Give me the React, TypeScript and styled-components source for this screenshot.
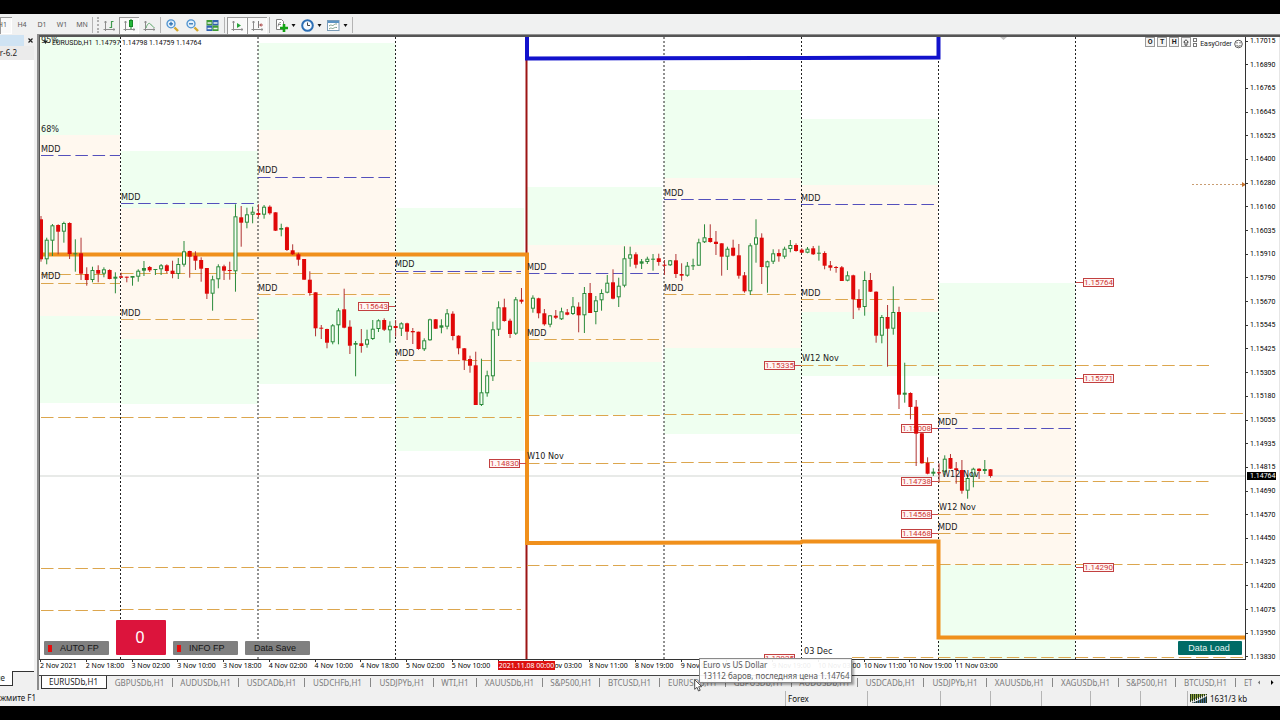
import React from 'react';
import styled, { createGlobalStyle, css } from 'styled-components';

const GlobalStyle = createGlobalStyle`
  * { box-sizing: border-box; }
  html, body { margin: 0; background: #000; }
  button { font: inherit; color: inherit; margin: 0; padding: 0; border: 0; background: none; border-radius: 0; }
`;

const uiFont = '"Noto Sans", "Open Sans", sans-serif';
const chartFont = '"DejaVu Sans Condensed", "DejaVu Sans", sans-serif';
const timeFont = '"Noto Sans", "DejaVu Sans", sans-serif';
const priceFont = 'Roboto, "Liberation Sans", sans-serif';

/* ---------- data ---------- */

type Candle = ['r' | 'g', number, number, number, number];

// colour, high, body top, body bottom, low
const candles: (Candle | null)[] = [
  ['r', 216, 219.3, 259.3, 261.7], ['g', 237.7, 239.7, 259.3, 264.3], ['g', 224, 225.3, 240.7, 256],
  ['r', 224.3, 225, 231.7, 254.3], ['g', 221.7, 223, 231.7, 242.7], ['r', 222.3, 223, 254, 259],
  ['g', 239.3, 253.3, 254.3, 271.7], ['r', 237.7, 253.3, 273.7, 280], ['r', 267.3, 274, 280, 285.7],
  ['g', 266.7, 270, 280, 282.3], ['r', 265.3, 270, 273.7, 282.3], ['g', 267.3, 269.3, 273.7, 277.3],
  ['r', 269.3, 270, 279, 279.3], ['g', 272.3, 276.7, 278.7, 293.3], ['r', 272.7, 276.3, 277.7, 278],
  ['r', 276.7, 276.7, 277.7, 282.3], ['g', 276, 276, 277.7, 285.7], ['g', 269.3, 270.7, 276.7, 281.7],
  ['g', 261, 268, 270.7, 276], ['r', 266, 267, 270.3, 272], ['g', 269, 269, 269.7, 275],
  ['g', 264, 265.3, 269.3, 275], ['r', 264.3, 265.3, 271, 273.3], ['r', 260.7, 270.7, 274, 278.3],
  ['g', 258, 264, 274, 279], ['g', 241, 251.3, 264.7, 266.7], ['r', 250.7, 251, 256.7, 277.7],
  ['r', 251.3, 255.7, 260.7, 270], ['r', 257.3, 260, 268.7, 281.7], ['r', 268, 268, 293.7, 299],
  ['g', 275.7, 279.3, 293.7, 310.7], ['g', 264.3, 266.3, 279.3, 288.3], ['r', 264.7, 266.3, 270.7, 280],
  ['r', 261.7, 270, 271, 279.7], ['g', 204.3, 216.3, 271.3, 291.7], ['r', 206, 217.3, 222.7, 246.7],
  ['g', 207.7, 214.3, 222.7, 228.3], ['g', 206.7, 211.7, 214.7, 223.3], ['r', 204.3, 213, 215, 217.3],
  ['g', 205, 206.7, 214.7, 218.7], ['r', 205.3, 206.7, 213.3, 214.7], ['r', 212.3, 212.3, 230.7, 231],
  ['g', 223.7, 228, 229.7, 236.3], ['r', 226.7, 227.3, 250, 251], ['r', 244.3, 250.3, 254.3, 255],
  ['r', 252.7, 254.3, 259.7, 265.7], ['r', 259, 259, 279.7, 279.7], ['r', 271.3, 279.7, 293, 295.7],
  ['r', 292.3, 292.3, 328.3, 336.3], ['r', 325, 327.7, 328.7, 339], ['r', 328.7, 329, 342.7, 348.3],
  ['g', 324, 325.3, 342.3, 344.3], ['g', 308.3, 310.3, 325.3, 344.3], ['r', 288.7, 309.3, 327.7, 328.3],
  ['r', 320.3, 326.7, 345.7, 354], ['g', 341, 343, 344.7, 376.3], ['r', 329, 343.3, 346, 352.7],
  ['g', 329.7, 339.3, 344.7, 347.7], ['g', 320, 328.7, 339, 340], ['g', 319.3, 320.3, 329, 332],
  ['r', 318.3, 320, 329.7, 331], ['g', 321.3, 325.7, 330.3, 342.7], ['r', 320, 326, 328, 336.7],
  ['g', 322.3, 323.3, 328.7, 336], ['r', 322.7, 323.3, 331.7, 340], ['r', 328, 331, 332.3, 344],
  ['r', 331.7, 331.7, 349, 349.7], ['g', 338.3, 340.3, 349.3, 351], ['g', 318.7, 319.3, 340.3, 340.7],
  ['r', 319, 319.3, 328.7, 329], ['g', 319.3, 325.3, 327.7, 333.3], ['g', 309, 313.3, 326.7, 329.3],
  ['r', 311.3, 313.7, 336, 340.3], ['r', 335.3, 335.7, 348.3, 354.3], ['r', 348, 348.3, 360.3, 370],
  ['r', 355.7, 359, 365.7, 372.7], ['r', 351.7, 365.3, 405, 405], ['g', 358.7, 392.3, 405, 406],
  ['g', 370.7, 375.3, 393.3, 396.7], ['g', 321.7, 329.3, 376.3, 381], ['g', 301.3, 307.3, 329.7, 336],
  ['r', 298.7, 307.3, 321, 321.7], ['r', 318.7, 320.7, 334, 338], ['g', 297, 299.3, 333.7, 335],
  ['r', 288, 299.7, 301.7, 303.7], null, ['g', 295.3, 297.7, 308.7, 312.7],
  ['r', 297.7, 298.3, 313.3, 318.3], ['r', 309, 313.3, 324.3, 325.7], ['g', 315.3, 315.3, 324.7, 327.3],
  ['r', 310, 315.7, 317.7, 319], ['g', 307.7, 311.3, 319.3, 320], ['r', 309, 312.3, 314.7, 315.3],
  ['g', 297, 306.3, 314, 315], ['r', 302.3, 306.7, 315.3, 332.3], ['g', 287, 293, 315.3, 333],
  ['r', 283, 293, 313, 313], ['g', 296, 300.3, 312, 324.3], ['g', 289.3, 293, 300.3, 310.7],
  ['g', 275, 282.7, 292.7, 293.3], ['r', 269.3, 282.3, 298.7, 299.3], ['g', 277.7, 285.7, 297.3, 307],
  ['g', 246.3, 258.3, 285.7, 287.3], ['g', 246.7, 254.3, 258.7, 266.7], ['r', 252.3, 254.3, 264.7, 268.3],
  ['g', 259, 261.3, 263.7, 269], ['g', 256.7, 258.7, 262, 264], ['g', 254, 258.7, 259, 270.7],
  ['r', 253.7, 258.3, 262, 265.7], ['r', 260, 264.7, 265.7, 275], ['g', 260, 260.3, 265.3, 266],
  ['r', 254, 260.3, 274, 278], ['r', 263.3, 274, 275.7, 280.7], ['g', 262, 265.7, 275.7, 276.7],
  ['g', 258.7, 265.3, 266.3, 270], ['g', 238.7, 242.3, 265.7, 265.7], ['g', 224.3, 237.3, 242.3, 243],
  ['r', 224.3, 238, 242, 242.7], ['r', 231, 241.7, 244, 255], ['r', 243.3, 243.3, 256.7, 275.7],
  ['g', 246.7, 248.7, 256.7, 270], ['r', 239.7, 247.7, 255.7, 256.3], ['r', 244, 255.3, 275.7, 278.7],
  ['r', 272, 275.3, 291.3, 292.7], ['g', 243.3, 245.3, 291.3, 295], ['g', 219.3, 237.3, 244.7, 262.7],
  ['r', 233.3, 237.7, 267, 284], ['g', 260.7, 261.3, 267.3, 292.7], ['g', 249.3, 253.3, 261.7, 264],
  ['r', 249.3, 253, 256.3, 261.7], ['g', 246.7, 248.7, 256.7, 258.7], ['g', 240, 245, 249, 252.3],
  ['r', 243.3, 245, 251, 251.7], ['r', 248.3, 249.7, 252.7, 253.3], ['g', 247, 248.7, 252.7, 253.3],
  ['r', 246, 248.3, 254.3, 255], ['g', 245.7, 252.7, 253.7, 260.7], ['r', 251.3, 253, 265.7, 269.3],
  ['r', 261, 265.3, 267.7, 270.7], ['r', 266, 267, 267.7, 272.7], ['r', 266, 267.3, 281, 281],
  ['g', 271.3, 275.3, 280.7, 281.3], ['r', 274.7, 275.3, 299.3, 319], ['r', 289.3, 299, 307.7, 310.3],
  ['g', 271.3, 280, 307, 315.7], ['r', 273, 280, 291.7, 292], ['r', 291.3, 291.7, 335.7, 342.7],
  ['g', 315, 317, 335.7, 343.3], ['r', 305, 317, 328.7, 366.7], ['g', 286.3, 312, 328.7, 334.7],
  ['r', 306.7, 312, 394.7, 409], ['g', 362.7, 392.7, 394.7, 402.7], ['r', 392.3, 393, 407, 419.3],
  ['r', 400, 406.7, 433.7, 466], ['r', 432.7, 433.3, 463.3, 463.7], ['r', 457.3, 462.7, 473.7, 474.3],
  ['g', 468.3, 471.7, 473.7, 476], ['r', 463.3, 472.3, 472.7, 482.7], ['g', 455.3, 458.7, 471.7, 475],
  ['r', 454, 458, 468.7, 469], ['r', 462, 468.3, 470, 483.7], ['r', 460, 470, 490.7, 493.7],
  ['g', 475, 478, 490.7, 498.7], ['g', 467.7, 468.7, 476.7, 487.3], ['r', 468.3, 468.7, 471, 479],
  ['g', 460, 469, 471, 474], ['r', 469, 469.3, 476, 477.7],
];

// left, right, upper band top, middle band top, middle band bottom, lower band bottom
const sessions = [
  [40, 120, 36, 135, 316, 403],
  [121, 258, 151, 208, 339, 404],
  [258, 395, 43, 130, 297, 384],
  [396, 524, 208, 270, 390, 451],
  [527, 662, 187, 245, 362, 415],
  [664, 801, 90, 178, 348, 434],
  [801, 938, 119, 185, 312, 376],
  [938, 1075, 283, 379, 565, 659],
];

const separators = [120.5, 258, 395.5, 664, 801.5, 938.5, 1075.5];

const deviationLines = [
  [41, 120, 155.5], [121, 254, 203.5], [258, 390, 177], [396, 521, 271],
  [527, 659, 273.5], [664, 796, 199.5], [801, 934, 204.5], [938, 1071, 428.5],
];

const goldLines = [
  [41, 110, 274], [41, 120, 283.5], [121, 395, 273], [396, 521, 273], [121, 254, 319],
  [258, 390, 294.5], [396, 521, 360], [527, 659, 339], [664, 796, 294.5], [801, 934, 299],
  [41, 120, 417], [121, 521, 417], [527, 664, 415], [664, 934, 414], [938, 1245, 413],
  [527, 664, 463], [664, 934, 462], [801, 1209, 365.5], [938, 1209, 481],
  [938, 1209, 514.5], [938, 1071, 533.5], [41, 120, 568], [121, 521, 567], [527, 664, 565.5],
  [664, 934, 565], [938, 1245, 564], [41, 120, 610.5], [121, 521, 609.5], [852, 1245, 657],
];

const notes: [number, number, string][] = [
  [41, 43, '95%'], [41, 132, '68%'], [41, 152, 'MDD'], [41, 279, 'MDD'], [121, 200, 'MDD'],
  [121, 316, 'MDD'], [258, 173, 'MDD'], [258, 291, 'MDD'], [395, 267, 'MDD'], [395, 356, 'MDD'],
  [527, 270, 'MDD'], [527, 336, 'MDD'], [664, 196, 'MDD'], [664, 291, 'MDD'], [801, 201, 'MDD'],
  [801, 296, 'MDD'], [802, 361, 'W12 Nov'], [527, 459, 'W10 Nov'], [938, 425, 'MDD'],
  [942, 477, 'W12 Nov'], [939, 510, 'W12 Nov'], [938, 530, 'MDD'], [804, 654, '03 Dec'],
];

// box left, middle, text, side of the tick
const tags: [number, number, string, 'left' | 'right'][] = [
  [358, 306, '1.15643', 'right'], [764, 365, '1.15335', 'right'], [489, 463, '1.14830', 'right'],
  [901, 428, '1.15008', 'right'], [901, 481, '1.14738', 'right'], [901, 514, '1.14568', 'right'],
  [901, 533, '1.14468', 'right'], [1083, 282, '1.15764', 'left'], [1083, 378, '1.15271', 'left'],
  [1083, 567, '1.14290', 'left'], [764, 658, '1.12925', 'right'],
];

const prices = [
  '1.17015', '1.16890', '1.16765', '1.16645', '1.16525', '1.16400', '1.16280', '1.16160', '1.16035',
  '1.15910', '1.15790', '1.15670', '1.15545', '1.15425', '1.15305', '1.15180', '1.15055', '1.14935',
  '1.14815', '1.14690', '1.14570', '1.14450', '1.14325', '1.14200', '1.14075', '1.13950', '1.13830',
];

const times = [
  '2 Nov 2021', '2 Nov 18:00', '3 Nov 02:00', '3 Nov 10:00', '3 Nov 18:00', '4 Nov 02:00', '4 Nov 10:00',
  '4 Nov 18:00', '5 Nov 02:00', '5 Nov 10:00', '', '8 Nov 03:00', '8 Nov 11:00', '8 Nov 19:00',
  '9 Nov 03:00', '9 Nov 11:00', '9 Nov 19:00', '10 Nov 03:00', '10 Nov 11:00', '10 Nov 19:00', '11 Nov 03:00',
];

// symbol, tab width
const symbols: [string, number][] = [
  ['EURUSDb', 66], ['GBPUSDb', 66], ['AUDUSDb', 66], ['USDCADb', 66], ['USDCHFb', 66], ['USDJPYb', 63],
  ['WTI', 43], ['XAUUSDb', 66], ['S&P500', 57], ['BTCUSD', 60], ['EURUSDb', 66], ['GBPUSDb', 66],
  ['AUDUSDb', 66], ['USDCADb', 66], ['USDJPYb', 63], ['XAUUSDb', 66], ['XAGUSDb', 66], ['S&P500', 57],
  ['BTCUSD', 60], ['ETHUSD', 60],
];

/* ---------- frame ---------- */

const Page = styled.div`
  position: relative;
  display: flex;
  flex-direction: column;
  min-height: 100vh;
  padding: 14px 0;
  overflow: hidden;
  background: #000;
  color: #1c1c1c;
  font: 8px/12px ${uiFont};
`;

const Toolbar = styled.header`
  display: flex;
  align-items: center;
  height: 20px;
  padding-top: 2px;
  background: #f0f1f1;
`;

const pressed = css`
  background: #f9f9f9;
  box-shadow: inset 1px 1px 0 #9a9a9a, inset -1px -1px 0 #fff;
`;

const PeriodButton = styled.button<{ $on?: boolean }>`
  display: flex;
  justify-content: center;
  align-items: center;
  flex: none;
  width: 20px;
  height: 17px;
  color: #5a5a5a;
  font-size: 7px;
  ${(p) => p.$on && css`
    ${pressed}
    width: 12px;
    justify-content: flex-end;
    padding-right: 5px;
  `}
`;

const ToolButton = styled.button<{ $on?: boolean; $menu?: boolean }>`
  display: flex;
  align-items: center;
  justify-content: center;
  gap: 3px;
  flex: none;
  width: ${(p) => (p.$menu ? 26 : 20)}px;
  height: 17px;
  ${(p) => p.$on && pressed}
`;

const Divider = styled.span<{ $grip?: boolean; $tight?: boolean }>`
  flex: none;
  width: ${(p) => (p.$grip ? 7 : 1)}px;
  height: 16px;
  margin: 0 ${(p) => (p.$grip ? 0 : p.$tight ? 1 : 2)}px;
  border-left: 1px solid #b4b4b4;
  border-right: ${(p) => (p.$grip ? '2px dotted #b0b0b0' : '0')};
`;

const Main = styled.main`
  display: flex;
  flex: 1;
  min-height: 0;
`;

const Dock = styled.aside`
  display: flex;
  flex-direction: column;
  flex: none;
  width: 37px;
  padding-right: 3px;
  background: #f0f0f0;
`;

const DockTitle = styled.div`
  display: flex;
  align-items: center;
  justify-content: flex-end;
  height: 11px;
  margin-top: 1px;
  background: linear-gradient(to right, #cfe3f3 24px, #f0f0f0 24px);
`;

const CloseButton = styled.button`
  display: flex;
  justify-content: center;
  width: 8px;
`;

const DockItem = styled.div`
  display: flex;
  justify-content: flex-end;
  height: 14px;
  padding-right: 17px;
  overflow: hidden;
  background: #ebebeb;
  font-size: 8px;
  line-height: 14px;
  white-space: nowrap;
`;

const DockBody = styled.div`
  flex: 1;
  background: #fff;
`;

const DockTabs = styled.div`
  display: flex;
  height: 19px;
`;

const DockTab = styled.button`
  display: flex;
  justify-content: flex-end;
  width: 13px;
  height: 15px;
  padding-right: 7px;
  overflow: hidden;
  background: #fff;
  border-right: 1px solid #333;
  border-bottom: 1px solid #333;
  line-height: 14px;
`;

const DockRule = styled.span`
  flex: 1;
  border-top: 1px solid #333;
`;

const ChartWindow = styled.section`
  display: flex;
  flex-direction: column;
  flex: 1;
  min-width: 0;
  background: #fff;
  border-top: 1px solid #909090;
  border-left: 2px solid #8c8c8c;
`;

const ChartRow = styled.div`
  display: flex;
  flex: 1;
  min-height: 0;
  border-top: 2px solid #555;
`;

const Plot = styled.div`
  position: relative;
  flex: 1;
  min-width: 0;
  height: 623px;
  overflow: hidden;
  background: #fff;
  border-left: 1px solid #555;
  border-right: 1px solid #333;
  border-bottom: 1px solid #333;
`;

const Drawing = styled.svg`
  display: block;
  width: 100%;
  height: 100%;
`;

const PriceAxis = styled.div`
  position: relative;
  display: flex;
  flex-direction: column;
  justify-content: space-between;
  flex: none;
  width: 34px;
  padding-top: 1px;
  border-right: 1px solid #e6e6e6;
  color: #000;
  font: 7px/6px ${priceFont};
`;

const PriceMark = styled.span`
  display: flex;
  align-items: center;
  gap: 2px;
  &::before {
    content: '';
    width: 2px;
    height: 1px;
    background: #333;
  }
`;

const CurrentPrice = styled.span`
  position: absolute;
  top: 435px;
  left: 1px;
  width: 29px;
  padding-left: 3px;
  background: #000;
  color: #fff;
  line-height: 8px;
`;

const TimeAxis = styled.div`
  position: relative;
  display: grid;
  grid-template-columns: repeat(21, 1fr);
  width: 961px;
  height: 15px;
  margin-left: 1px;
  color: #000;
  font: 7px/8px ${timeFont};
`;

const TimeMark = styled.span`
  white-space: nowrap;
  &::before {
    content: '';
    display: block;
    width: 1px;
    height: 2px;
    background: #333;
  }
`;

const CursorTime = styled.span`
  position: absolute;
  top: 1px;
  left: 458px;
  width: 57px;
  height: 9px;
  background: #dc1010;
  color: #fff;
  line-height: 9px;
  text-align: center;
  white-space: nowrap;
`;

/* ---------- buttons over the chart ---------- */

const ExpertButtons = styled.div`
  position: absolute;
  left: 4px;
  bottom: 4px;
  display: flex;
  align-items: flex-end;
  gap: 7px;
`;

const ExpertButton = styled.button<{ $lamp?: boolean }>`
  display: flex;
  align-items: center;
  gap: 8px;
  width: 65px;
  height: 14px;
  padding-left: ${(p) => (p.$lamp ? 4 : 9)}px;
  border-radius: 1px;
  background: #808080;
  color: #161616;
  font: 9px/14px "Liberation Sans", Arial, sans-serif;
  white-space: nowrap;
`;

const Lamp = styled.i`
  width: 4px;
  height: 7px;
  background: #e80c0c;
`;

const CounterButton = styled.button`
  width: 50px;
  height: 35px;
  padding-right: 2px;
  border-radius: 1px;
  background: #dc143c;
  color: #fff;
  font: 16px/35px "Liberation Sans", Arial, sans-serif;
`;

const LoadButton = styled.button`
  position: absolute;
  right: 3px;
  bottom: 4px;
  width: 64px;
  height: 14px;
  padding-right: 2px;
  border-radius: 1px;
  background: #006b66;
  color: #e6f4f3;
  font: 9px/14px "Liberation Sans", Arial, sans-serif;
`;

const OrderPanel = styled.div`
  position: absolute;
  top: 0;
  right: 2px;
  display: flex;
  align-items: center;
  gap: 2px;
  height: 12px;
  font: 7px/12px ${priceFont};
`;

const OrderButton = styled.button`
  display: flex;
  justify-content: center;
  align-items: center;
  width: 10px;
  height: 10px;
  margin-bottom: 2px;
  background: #f4f4f4;
  border: 1px solid #999;
  font-size: 7px;
  line-height: 8px;
  font-weight: 700;
`;

const OrderName = styled.span`
  margin-top: 1px;
`;

/* ---------- tabs and status ---------- */

const TabStrip = styled.nav`
  display: flex;
  flex: none;
  height: 15px;
  padding-left: 2px;
  overflow: hidden;
  background: #f0f0f0;
  border-top: 1px solid #444;
`;

const Tabs = styled.div`
  display: flex;
  flex: 1;
  min-width: 0;
  overflow: hidden;
`;

const Tab = styled.button<{ $w: number; $active?: boolean }>`
  position: relative;
  flex: none;
  width: ${(p) => p.$w}px;
  height: 13px;
  padding-right: 1px;
  color: #7c7c7c;
  line-height: 12px;
  white-space: nowrap;
  &::after {
    content: '';
    position: absolute;
    top: 2px;
    right: 0;
    width: 1px;
    height: 9px;
    background: #888;
  }
  ${(p) => p.$active && css`
    background: #fff;
    color: #1c1c1c;
    border: solid #333;
    border-width: 0 1px 1px;
    &::after { display: none; }
  `}
`;

const TabArrows = styled.div`
  display: flex;
  flex: none;
  width: 28px;
`;

const ArrowButton = styled.button`
  display: flex;
  justify-content: center;
  align-items: center;
  width: 13px;
  height: 13px;
`;

const StatusBar = styled.footer`
  display: flex;
  align-items: stretch;
  flex: none;
  height: 16px;
  padding-top: 1px;
  background: #f0f0f0;
  color: #111;
  font-size: 8px;
  line-height: 14px;
`;

const StatusHelp = styled.span`
  flex: 1;
  min-width: 0;
  overflow: hidden;
  white-space: nowrap;
`;

const StatusCell = styled.span<{ $w: number }>`
  display: flex;
  align-items: center;
  gap: 3px;
  flex: none;
  width: ${(p) => p.$w}px;
  padding-left: 2px;
  border-left: 1px solid #b5b5b5;
`;

const Tooltip = styled.div`
  position: absolute;
  left: 699px;
  bottom: 37px;
  width: 153px;
  height: 25px;
  padding: 0 3px;
  background: rgba(255, 255, 255, 0.92);
  border: 1px solid #8a8a8a;
  box-shadow: 2px 2px 2px rgba(0, 0, 0, 0.35);
  color: #5a5a5a;
  line-height: 11px;
  white-space: nowrap;
`;

const Pointer = styled.svg`
  position: absolute;
  left: 694px;
  bottom: 28px;
`;

/* ---------- icons ---------- */

const Icon = ({ children }: { children: React.ReactNode }) => (
  <svg width="13" height="13" viewBox="0 0 13 13" fill="none" aria-hidden="true">{children}</svg>
);

const Caret = () => (
  <svg width="5" height="3" viewBox="0 0 5 3" aria-hidden="true"><path d="M.5 0h4L2.500 3z" fill="#111" /></svg>
);

const Axes = () => <path d="M2.500 2v10M.5 10.500h11.500M1.500 3.500l1-1.500 1 1.500M10.500 9.500l1.500 1-1.500 1" stroke="#8c8c8c" />;

const BarsIcon = () => <Icon><Axes /><path d="M8.500 2v7M8.500 2.500h2M6.500 8.500h2" stroke="#3f9a4e" strokeWidth="1.200" /></Icon>;
const CandleIcon = () => (
  <Icon><Axes /><path d="M8 0v10" stroke="#178a28" /><rect x="6.500" y="1.500" width="3" height="6" fill="#25b83a" stroke="#178a28" /></Icon>
);
const LineIcon = () => <Icon><Axes /><path d="M3 9C4.500 4.500 6 3.500 7.500 5s2 3 4 3.500" stroke="#5fa86c" /></Icon>;
const ZoomIcon = ({ plus }: { plus?: boolean }) => (
  <Icon>
    <path d="M8.500 8.500l3.500 3.500" stroke="#d2a72e" strokeWidth="2.400" />
    <circle cx="5" cy="4.800" r="4" fill="#e2f0fb" stroke="#4f93cf" strokeWidth="1.300" />
    <path d={plus ? 'M3 4.800h4M5 2.800v4' : 'M3 4.800h4'} stroke="#2469ad" strokeWidth="1.200" />
  </Icon>
);
const TileIcon = () => (
  <Icon>
    <rect x=".5" y="1" width="6" height="5.500" fill="#3f9b35" /><rect x="6.500" y="1" width="6" height="5.500" fill="#2f62b0" />
    <rect x=".5" y="6.500" width="6" height="5.500" fill="#2f62b0" /><rect x="6.500" y="6.500" width="6" height="5.500" fill="#3f9b35" />
    <path d="M1.500 4h4M7.500 4h4M1.500 9.500h4M7.500 9.500h4" stroke="#e9f3ea" strokeWidth="1.600" />
  </Icon>
);
const ScrollIcon = () => <Icon><Axes /><path d="M6 4l4 2.500L6 9z" fill="#27a53a" /></Icon>;
const ShiftIcon = () => (
  <Icon><Axes /><path d="M7.500 2v7" stroke="#7a7a7a" /><path d="M8 6l2.500-2v1.500H12v1h-1.500V8z" fill="#b35a5a" /></Icon>
);
const IndicatorIcon = () => (
  <Icon>
    <path d="M1.500.5h5l2 2v8h-7z" fill="#fff" stroke="#7f7f7f" />
    <path d="M3 7.500c1-4 1-4 3-4M3 5.500h3" stroke="#6f6f6f" strokeWidth=".8" />
    <path d="M9 5v8M5 9h8" stroke="#12a312" strokeWidth="2.600" />
  </Icon>
);
const ClockIcon = () => (
  <Icon>
    <circle cx="6.500" cy="6.500" r="5.300" fill="#f5faff" stroke="#2c6fb5" strokeWidth="2" />
    <path d="M6.500 3.500v3h2.500" stroke="#444" />
  </Icon>
);
const TemplateIcon = () => (
  <Icon>
    <rect x=".5" y="1.500" width="11.500" height="10" fill="#fff" stroke="#7a9cb8" />
    <path d="M1 3h11" stroke="#5b93c2" strokeWidth="2" />
    <path d="M2 7c2-2 3 0 4-.5s2-2 4-1.500M2 10c2-2 3 0 4-.5s2-1.500 4-1" stroke="#7ba08a" />
  </Icon>
);

const TrafficIcon = () => (
  <svg width="17" height="9" viewBox="0 0 17 9" aria-hidden="true">
    <path d="M0 0h17L0 7z" fill="#8fa63c" />
    <path d="M17 2v7H2z" fill="#3f6a94" />
    <path d="M.5 0v9M2.500 0v9M4.500 0v9M6.500 0v9M8.500 0v9M10.500 0v9M12.500 0v9M14.500 0v9M16.500 0v9" stroke="#26351c" />
    <path d="M0 8.500C5 7.500 11 5 17 1.500" stroke="#f4f4f4" fill="none" />
  </svg>
);

/* ---------- chart ---------- */

const BAR = 5.72;
const RED = '#e00808';
const GREEN = '#2b8a3b';

const CandleShape = ({ x, c }: { x: number; c: Candle }) => {
  const [kind, high, top, bottom, low] = c;
  const height = Math.max(bottom - top, 1);
  return (
    <g>
      <path d={`M${x} ${high}V${low}`} stroke={kind === 'r' ? '#b03434' : GREEN} strokeWidth="1" />
      {kind === 'r' || height < 3 ? (
        <rect x={x - 2} y={top} width="4" height={height} fill={kind === 'r' ? RED : GREEN} />
      ) : (
        <rect x={x - 1.5} y={top + 0.5} width="3" height={height - 1} fill="#f6fff4" stroke={GREEN} />
      )}
    </g>
  );
};

const LevelLine = ({ line: [from, to, y], color }: { line: number[]; color: string }) => (
  <path d={`M${from} ${Math.floor(y) + 0.5}H${to}`} stroke={color} strokeWidth="1.200" strokeDasharray="12.5 4.700" />
);

const Chart = () => (
  <Drawing role="img" aria-label="EURUSD hourly chart">
    <g transform="translate(-40 -37)" fontFamily={chartFont}>
      {sessions.map(([l, r, a, b, c, d]) => (
        <g key={l}>
          <rect x={l} y={a} width={r - l} height={d - a} fill="#effff0" />
          <rect x={l} y={b} width={r - l} height={c - b} fill="#fff8ef" />
        </g>
      ))}
      <path d="M40 476H1246" stroke="#e8eae8" strokeWidth="2" />
      {separators.map((x) => (
        <path key={x} d={`M${x} 37V660`} stroke="#222" strokeDasharray="2 2" />
      ))}
      <path d="M526.500 37V660" stroke="#9c1515" strokeWidth="2" />
      {goldLines.map((line) => <LevelLine key={line.join()} line={line} color="#dca64e" />)}
      {deviationLines.map((line) => <LevelLine key={line.join()} line={line} color="#5450bc" />)}
      <path d="M40 254.500H527V543L801 542.500 802 541.500H938.500V637.500H1246" fill="none" stroke="#f0901c" strokeWidth="4" />
      <path d="M527 36V58.500L801 58 938.500 57.500V36" fill="none" stroke="#1212cc" strokeWidth="4" />
      {tags.map(([x, y, text, side]) => (
        <g key={text}>
          <path d={side === 'right' ? `M${x + 31} ${y + 0.5}h6` : `M${x} ${y + 0.5}h-7`} stroke="#cc4a4a" />
          <rect x={x + 0.5} y={y - 3.5} width="30" height="8" fill="#fff6f4" stroke="#c24040" />
          <text x={x + 15.5} y={y + 3} fontSize="8" textAnchor="middle" fontFamily={priceFont} fill="#cf3a3a">{text}</text>
        </g>
      ))}
      {candles.map((c, i) => c && <CandleShape key={i} x={41 + i * BAR} c={c} />)}
      {notes.map(([x, y, text]) => (
        <text key={`${x}-${y}`} x={x} y={y} fontSize="9" fill="#222">{text}</text>
      ))}
      <path d="M43 40.500h5l-2.500 3.500z" fill="#222" />
      <text y="45" fontSize="7" fontFamily={priceFont} fill="#111">
        <tspan x="52">EURUSDb,H1</tspan>
        <tspan x="95">1.14797</tspan>
        <tspan x="122">1.14798</tspan>
        <tspan x="149">1.14759</tspan>
        <tspan x="176">1.14764</tspan>
      </text>
      <path d="M1000 37h7l-3.500 3z" fill="#c4c4c4" />
      <path d="M1192 184.500H1242" stroke="#c99d72" strokeDasharray="2 2" />
      <path d="M1242 182l4 2.500-4 2.500z" fill="#c4712c" />
    </g>
  </Drawing>
);

/* ---------- page ---------- */

export default function App() {
  return (
    <Page>
      <GlobalStyle />
      <Toolbar>
        <PeriodButton $on>H1</PeriodButton>
        <PeriodButton>H4</PeriodButton>
        <PeriodButton>D1</PeriodButton>
        <PeriodButton>W1</PeriodButton>
        <PeriodButton>MN</PeriodButton>
        <Divider $grip />
        <ToolButton aria-label="Bar chart"><BarsIcon /></ToolButton>
        <ToolButton aria-label="Candlesticks" $on><CandleIcon /></ToolButton>
        <ToolButton aria-label="Line chart"><LineIcon /></ToolButton>
        <Divider $tight />
        <ToolButton aria-label="Zoom in"><ZoomIcon plus /></ToolButton>
        <ToolButton aria-label="Zoom out"><ZoomIcon /></ToolButton>
        <ToolButton aria-label="Tile windows"><TileIcon /></ToolButton>
        <Divider />
        <ToolButton aria-label="Auto scroll" $on><ScrollIcon /></ToolButton>
        <ToolButton aria-label="Chart shift" $on><ShiftIcon /></ToolButton>
        <Divider />
        <ToolButton aria-label="Indicators" $menu><IndicatorIcon /><Caret /></ToolButton>
        <ToolButton aria-label="Periods" $menu><ClockIcon /><Caret /></ToolButton>
        <ToolButton aria-label="Templates" $menu><TemplateIcon /><Caret /></ToolButton>
        <Divider />
      </Toolbar>
      <Main>
        <Dock>
          <DockTitle>
            <CloseButton aria-label="Close">
              <svg width="5" height="5" viewBox="0 0 5 5" aria-hidden="true"><path d="M.5.5l4 4M4.500.5l-4 4" stroke="#222" strokeWidth="1.200" /></svg>
            </CloseButton>
          </DockTitle>
          <DockItem>r-6.2</DockItem>
          <DockBody />
          <DockTabs><DockTab>ые</DockTab><DockRule /></DockTabs>
        </Dock>
        <ChartWindow>
          <ChartRow>
            <Plot>
              <Chart />
              <OrderPanel>
                <OrderButton>O</OrderButton>
                <OrderButton>T</OrderButton>
                <OrderButton>H</OrderButton>
                <OrderButton aria-label="Up">
                  <svg width="6" height="7" viewBox="0 0 6 7" aria-hidden="true"><path d="M3 .7L5.300 3.200H4v3H2v-3H.7z" fill="#fff" stroke="#222" strokeWidth=".8" /></svg>
                </OrderButton>
                <svg width="5" height="10" viewBox="0 0 5 10" fill="#fff" stroke="#777" aria-hidden="true"><rect x=".5" y=".5" width="3" height="3" /><rect x=".5" y="5.500" width="3" height="3" /></svg>
                <OrderName>EasyOrder</OrderName>
                <svg width="9" height="12" viewBox="0 0 9 12" fill="none" stroke="#333" strokeWidth=".8" aria-hidden="true"><circle cx="4.500" cy="7" r="3.800" /><path d="M2.500 8.500q2 1.500 4 0M3 5v1.500M6 5v1.500" /></svg>
              </OrderPanel>
              <ExpertButtons>
                <ExpertButton $lamp><Lamp />AUTO FP</ExpertButton>
                <CounterButton>0</CounterButton>
                <ExpertButton $lamp><Lamp />INFO FP</ExpertButton>
                <ExpertButton>Data Save</ExpertButton>
              </ExpertButtons>
              <LoadButton>Data Load</LoadButton>
            </Plot>
            <PriceAxis>
              {prices.map((p) => <PriceMark key={p}>{p}</PriceMark>)}
              <CurrentPrice>1.14764</CurrentPrice>
            </PriceAxis>
          </ChartRow>
          <TimeAxis>
            {times.map((t, i) => <TimeMark key={i}>{t}</TimeMark>)}
            <CursorTime>2021.11.08 00:00</CursorTime>
          </TimeAxis>
          <TabStrip>
            <Tabs>
              {symbols.map(([s, w], i) => <Tab key={i} $w={w} $active={i === 0}>{s},H1</Tab>)}
            </Tabs>
            <TabArrows>
              <ArrowButton aria-label="Previous tabs"><svg width="4" height="5" viewBox="0 0 4 5" aria-hidden="true"><path d="M3 .5v4L.8 2.500z" fill="#777" /></svg></ArrowButton>
              <ArrowButton aria-label="Next tabs"><svg width="4" height="5" viewBox="0 0 4 5" aria-hidden="true"><path d="M1 0v5l2.500-2.500z" fill="#000" /></svg></ArrowButton>
            </TabArrows>
          </TabStrip>
        </ChartWindow>
      </Main>
      <StatusBar>
        <StatusHelp>жмите F1</StatusHelp>
        <StatusCell $w={82}>Forex</StatusCell>
        <StatusCell $w={73} />
        <StatusCell $w={50} />
        <StatusCell $w={51} />
        <StatusCell $w={49} />
        <StatusCell $w={50} />
        <StatusCell $w={47} />
        <StatusCell $w={93}><TrafficIcon />1631/3 kb</StatusCell>
      </StatusBar>
      <Tooltip>Euro vs US Dollar<br />13112 баров, последняя цена 1.14764</Tooltip>
      <Pointer width="9" height="13" viewBox="0 0 9 13" aria-hidden="true">
        <path d="M.7.7v9.600l2.300-2 1.500 3.700 1.700-.7L4.700 7.700h3z" fill="#fff" stroke="#444" strokeWidth=".9" />
      </Pointer>
    </Page>
  );
}
